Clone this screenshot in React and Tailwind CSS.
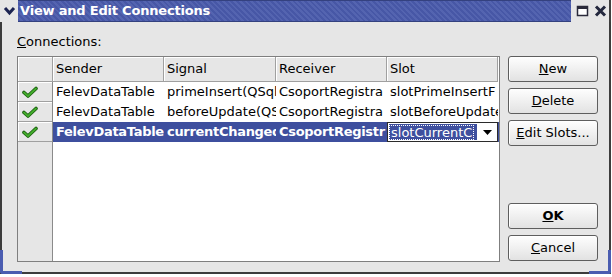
import React from "react";

const cols = ["Sender", "Signal", "Receiver", "Slot"];

const rows = [
  ["FelevDataTable", "primeInsert(QSqlRecord*)", "CsoportRegistra", "slotPrimeInsertF"],
  ["FelevDataTable", "beforeUpdate(QSqlRecord*)", "CsoportRegistra", "slotBeforeUpdate"],
  ["FelevDataTable", "currentChanged(int,int)", "CsoportRegistr", "slotCurrentC"],
];

function Check() {
  return (
    <svg width="16" height="12" viewBox="0 0 16 12">
      <path d="M2 6.5 L6 10 L14 2.5" fill="none" stroke="#1b5e10" strokeWidth="3.6" strokeLinecap="round" strokeLinejoin="round" />
      <path d="M2 6.5 L6 10 L14 2.5" fill="none" stroke="#43ad2c" strokeWidth="1.8" strokeLinecap="round" strokeLinejoin="round" />
    </svg>
  );
}

function Btn({ children, bold }) {
  return (
    <button className={`w-[90px] h-[26px] rounded-[3px] border border-[#5e5e5e] bg-[linear-gradient(#fefefe,#e2e2e2)] shadow-[inset_1px_1px_0_#fff] flex items-center justify-center text-[13px] text-black ${bold ? "font-bold" : ""}`}>
      {children}
    </button>
  );
}

export default function App() {
  return (
    <div className="w-[612px] h-[277px] bg-white font-['DejaVu_Sans',sans-serif] text-[13px] text-black">
      <div className="w-[611px] h-[274px] flex flex-col relative">
        {/* title bar */}
        <div className="h-[22px] flex bg-[#e6e6e6]">
          <div className="w-[18px] flex items-center justify-center">
            <svg width="13" height="10" viewBox="0 0 13 10">
              <path d="M2 2 L6.5 7 L11 2" fill="none" stroke="#1c2452" strokeWidth="3" />
            </svg>
          </div>
          <div className="flex-1 flex items-center pl-[2px] bg-[repeating-linear-gradient(45deg,#4757a6_0px,#4757a6_2px,#5464b0_2px,#5464b0_4px)] border-y border-[#34417f]">
            <span className="text-white font-bold text-[13px] tracking-[-0.2px]">View and Edit Connections</span>
          </div>
          <div className="w-[40px] flex items-center justify-around pl-[2px] border-r-2 border-[#404040]">
            <svg width="13" height="12" viewBox="0 0 13 12">
              <rect x="1.5" y="1.5" width="10" height="9" fill="#fff" stroke="#2a2a3a" strokeWidth="1.5" />
              <rect x="1" y="1" width="11" height="3" fill="#2a2a3a" />
            </svg>
            <svg width="13" height="12" viewBox="0 0 13 12">
              <path d="M2 1.5 L11 10.5 M11 1.5 L2 10.5" stroke="#23273d" strokeWidth="3" />
            </svg>
          </div>
        </div>

        {/* body */}
        <div className="flex-1 flex flex-col bg-[#e6e6e6] border-l-2 border-r-2 border-b-2 border-[#3c3c3c] pl-[15px] pr-[9px]">
          <div className="pt-[12px] h-[34px] leading-[16px]">
            <span className="underline">C</span>onnections:
          </div>
          <div className="flex">
            <div className="w-[483px] h-[206px] border border-[#7f7f7f] bg-white flex flex-col overflow-hidden">
              <div className="flex h-[25px]">
                <div className="w-[35px] bg-[#e6e6e6] border-r border-b border-[#a0a0a0] shadow-[inset_1px_1px_0_#fff]" />
                {cols.map((c, i) => (
                  <div
                    key={c}
                    className={`${i === 1 ? "w-[112px]" : "w-[111px]"} bg-[#e6e6e6] border-r border-b border-[#a0a0a0] shadow-[inset_1px_1px_0_#fff] flex items-center pl-[3px]`}
                  >
                    {c}
                  </div>
                ))}
              </div>
              <div className="flex flex-1">
                <div className="w-[35px] bg-[#e6e6e6] border-r border-[#8a8a8a] flex flex-col">
                  {rows.map((r, i) => (
                    <div key={i} className="h-[20px] border-b border-[#a0a0a0] shadow-[inset_1px_1px_0_#fff] flex items-center pl-[4px]">
                      <Check />
                    </div>
                  ))}
                </div>
                <div className="flex-1 flex flex-col">
                  {rows.map((r, i) => {
                    const sel = i === 2;
                    return (
                      <div key={i} className={`flex h-[20px] ${sel ? "bg-[#3e4f9e] text-white font-bold tracking-[-0.3px]" : ""}`}>
                        {r.map((t, j) =>
                          sel && j === 3 ? (
                            <div key={j} className="w-[111px] h-[20px] flex bg-white border border-[#2b2b2b] tracking-normal font-normal">
                              <div className="w-[88px] m-[1px] bg-[#3e4f9e] flex items-center overflow-hidden">
                                <span className="border border-dotted border-white h-[15px] leading-[13px] px-[1px] whitespace-nowrap">{t}</span>
                              </div>
                              <div className="flex-1 flex items-center justify-center bg-white">
                                <svg width="9" height="5" viewBox="0 0 9 5">
                                  <path d="M0 0 L9 0 L4.5 5 Z" fill="#000" />
                                </svg>
                              </div>
                            </div>
                          ) : (
                            <div
                              key={j}
                              className={`${j === 1 ? "w-[112px]" : "w-[111px]"} pl-[3px] flex items-center overflow-hidden whitespace-nowrap`}
                            >
                              <span className="block w-full overflow-hidden">{t}</span>
                            </div>
                          )
                        )}
                      </div>
                    );
                  })}
                </div>
              </div>
            </div>

            <div className="ml-[8px] h-[206px] flex flex-col justify-between pb-[1px]">
              <div className="flex flex-col gap-[6px]">
                <Btn><span className="underline">N</span>ew</Btn>
                <Btn><span className="underline">D</span>elete</Btn>
                <Btn><span className="underline">E</span>dit Slots...</Btn>
              </div>
              <div className="flex flex-col gap-[6px]">
                <Btn bold><span className="underline">O</span>K</Btn>
                <Btn><span className="underline">C</span>ancel</Btn>
              </div>
            </div>
          </div>
        </div>

        {/* resize grips */}
        <div className="absolute left-0 bottom-0 w-[22px] h-[24px] border-l-[3px] border-b-[3px] border-[#4a5cb0] rounded-bl-[3px]" />
        <div className="absolute right-0 bottom-0 w-[22px] h-[24px] border-r-[3px] border-b-[3px] border-[#4a5cb0] rounded-br-[3px]" />
      </div>
    </div>
  );
}
